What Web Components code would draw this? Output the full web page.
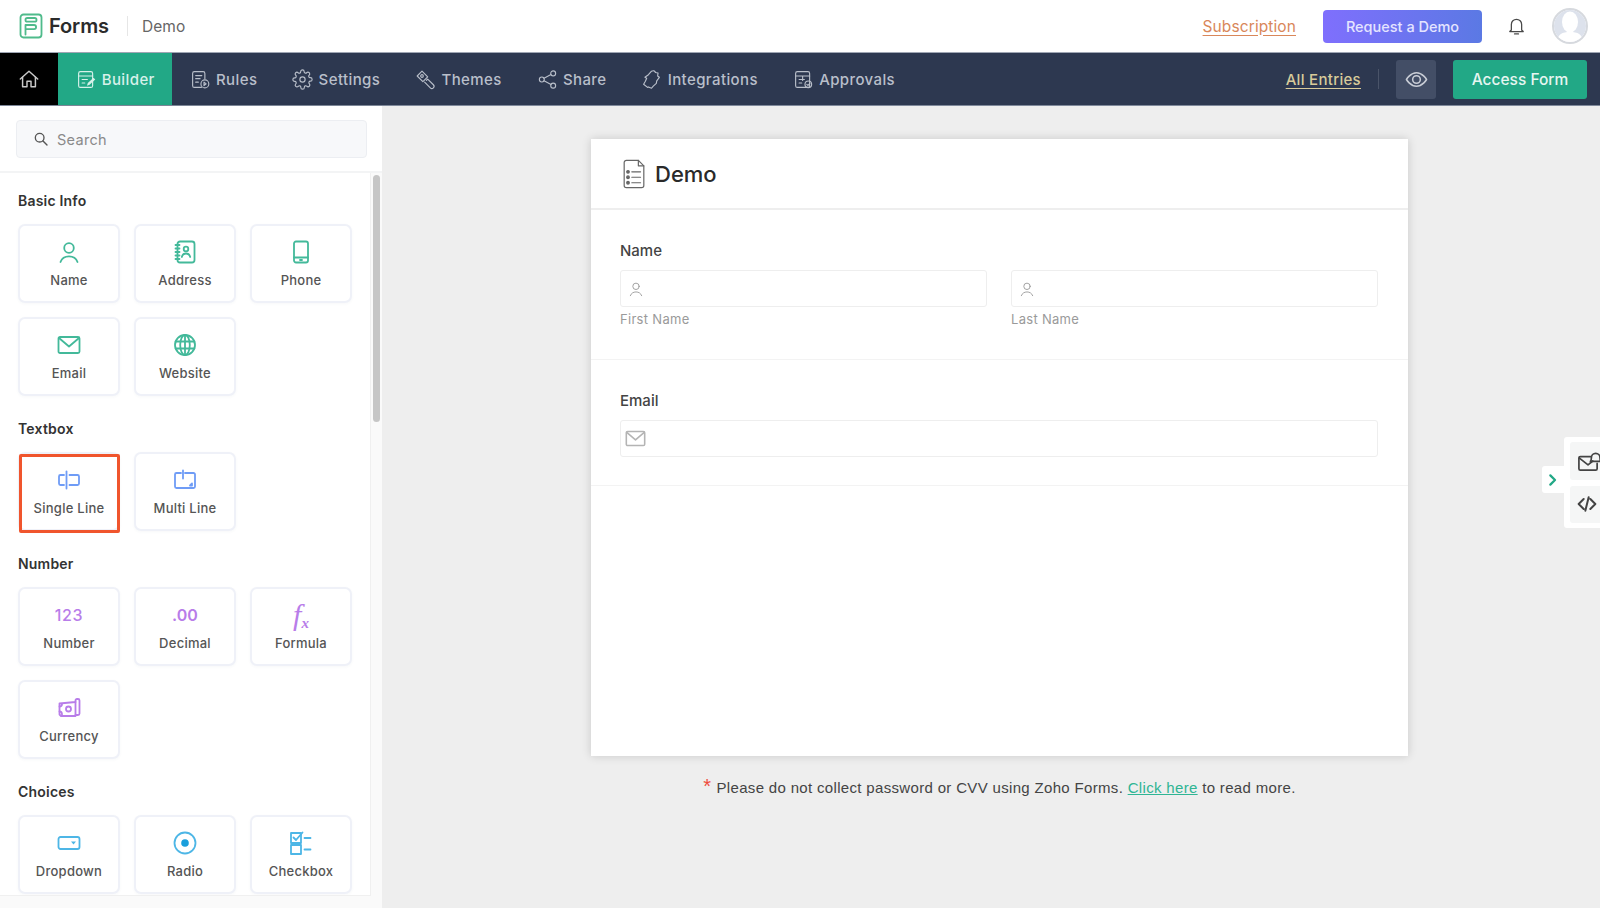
<!DOCTYPE html>
<html lang="en">
<head>
<meta charset="utf-8">
<title>Forms - Demo</title>
<style>
  html, body { margin: 0; padding: 0; height: 100%; overflow: hidden; background: #eee; }
  body { font-family: Inter, "Liberation Sans", sans-serif; }
</style>
</head>
<body>
<fz-app></fz-app>

<script>
// stroke icons, all on a 24 box unless VIEWBOX says otherwise
const ICONS = {
  home: `<path d="M2.5 12 12 3.5l9.5 8.5"/><path d="M5 10v10.5h4.8v-6h4.4v6H19V10"/>`,
  builder: `<rect x="3" y="3" width="16" height="18" rx="2"/><path d="M3 8h16M7 12h6M7 16h3"/><path d="m12.5 19 1-3 6.5-6 2 2-6.5 6z" fill="currentColor" stroke="none"/>`,
  rules: `<path d="M17 11V5a2 2 0 0 0-2-2H5a2 2 0 0 0-2 2v14a2 2 0 0 0 2 2h8"/><path d="M6.5 7.500h7M6.500 11h5M6.500 15h3"/><circle cx="17" cy="17" r="4.500"/><path d="m16 15 2.500 2-2.500 2z"/>`,
  settings: `<path d="M19.400 15a1.650 1.650 0 0 0 .33 1.820l.06.06a2 2 0 0 1-2.830 2.830l-.06-.06a1.650 1.650 0 0 0-2.820 1.180V21a2 2 0 0 1-4 0v-.09A1.650 1.650 0 0 0 7.180 19.730l-.06.06a2 2 0 0 1-2.830-2.830l.06-.06a1.650 1.650 0 0 0-1.180-2.820H3a2 2 0 0 1 0-4h.09A1.650 1.650 0 0 0 4.270 7.180l-.06-.06a2 2 0 0 1 2.830-2.830l.06.06A1.650 1.650 0 0 0 9.920 3.170V3a2 2 0 0 1 4 0v.09a1.650 1.650 0 0 0 2.820 1.180l.06-.06a2 2 0 0 1 2.830 2.830l-.06.06a1.650 1.650 0 0 0 1.180 2.820H21a2 2 0 0 1 0 4h-.09a1.650 1.650 0 0 0-1.510 1z"/><circle cx="12" cy="12" r="3"/>`,
  themes: `<path d="M2.500 8 8 2.500l6.500 6.500L9 14.500z"/><circle cx="8" cy="8" r="1.500"/><path d="m13 13 1.500-1.500 6.500 6.500a2.400 2.400 0 0 1-3.500 3.500L11 15"/>`,
  share: `<circle cx="18.500" cy="5" r="2.800"/><circle cx="5.500" cy="12" r="2.800"/><circle cx="18.500" cy="19" r="2.800"/><path d="m8 10.600 8-4.200M8 13.400l8 4.200"/>`,
  integrations: `<path d="M12 2.500c2-1 4-.5 4.500 1.500l3 .5-.5 3.500 2 1.500-3 4-.5 3-3.500 3-2 2.500-3.500-1.500-1 .5-4.500-3.500L5 14l1.500-3.500-2-1 4-3z"/>`,
  approvals: `<rect x="3" y="3" width="16" height="18" rx="2"/><path d="M3 8h16M7 12h6M7 16h3M11 8v5"/><circle cx="17.500" cy="17.500" r="3.800"/><path d="m15.800 17.500 1.300 1.300 2.200-2.400"/>`,
  eye: `<path d="M1.500 12S5.500 5 12 5s10.500 7 10.500 7-4 7-10.500 7S1.500 12 1.500 12z"/><circle cx="12" cy="12" r="4"/>`,
  bell: `<path d="M5.500 17v-7a6.500 6.500 0 0 1 13 0v7l2 2h-17z"/><path d="M9.500 22h5"/>`,
  search: `<circle cx="10" cy="10" r="6.500"/><path d="m15 15 6 6"/>`,
  person: `<circle cx="12" cy="8" r="4.800"/><path d="M3.500 22c1.300-3.600 4.500-5.600 8.500-5.600s7.200 2 8.500 5.600"/>`,
  address: `<rect x="4.500" y="1.500" width="17" height="21" rx="2.500"/><path d="M2.500 5h4M2.500 8.500h4M2.500 12h4M2.500 15.500h4M2.500 19h4"/><circle cx="13" cy="9" r="2.300"/><path d="M8.800 17c.6-2.300 2.100-3.500 4.200-3.500s3.600 1.200 4.200 3.500"/>`,
  phone: `<rect x="5" y="1.500" width="14" height="21" rx="2"/><path d="M5 17.500h14"/><path d="M11 20h2"/>`,
  mail: `<rect x="1.500" y="4" width="21" height="16" rx="1.500"/><path d="m2 5 10 8.500L22 5"/>`,
  globe: `<circle cx="12" cy="12" r="10"/><ellipse cx="12" cy="12" rx="4.800" ry="10"/><path d="M12 2v20M2.600 8.500h18.800M2.600 15.500h18.800"/>`,
  single: `<path d="M7 7H3.500A1.500 1.500 0 0 0 2 8.500v7A1.500 1.500 0 0 0 3.500 17H7"/><path d="M9.500 3.500v17"/><path d="M12.500 7h8A1.500 1.500 0 0 1 22 8.500v7a1.500 1.500 0 0 1-1.500 1.500h-8"/>`,
  multi: `<path d="M8 5H3.500A1.500 1.500 0 0 0 2 6.500v12A1.500 1.500 0 0 0 3.500 20h17a1.500 1.500 0 0 0 1.500-1.500v-12A1.500 1.500 0 0 0 20.500 5H12"/><path d="M10 2.500v8"/><path d="m19 15.500-2 2h2z" fill="currentColor"/>`,
  currency: `<path d="M2 7.500 18 6V4.500a1.500 1.500 0 0 1 1.500-1.500h1A1.500 1.500 0 0 1 22 4.500v13a1.500 1.500 0 0 1-1.500 1.500H18v1H3.500L2 18.500z"/><path d="M18 6v13"/><circle cx="11" cy="13" r="2.500"/><path d="M2 10.500c1.500 0 2.500-1 2.500-2.500M2 15.500c1.500 0 2.500 1 2.500 3"/>`,
  dropdown: `<rect x="1.500" y="6" width="21" height="12" rx="2"/><path d="m14 10.500h5l-2.500 3z" fill="currentColor" stroke="none"/>`,
  radio: `<circle cx="12" cy="12" r="10.500"/><circle cx="12" cy="12" r="3.800" fill="#1a9fdc" stroke="none"/>`,
  checkbox: `<rect x="2" y="2" width="10" height="10"/><rect x="2" y="14" width="10" height="9"/><path d="m4.500 6.500 2.500 2.500 6.500-7.500M15.500 7h6M15.500 18.500h6"/>`,
  doc: `<path d="M15 1.500H4A2 2 0 0 0 2 3.500v21a2 2 0 0 0 2 2h14a2 2 0 0 0 2-2V6.500z"/><path d="M15 1.500v5h5"/><path d="M9 12h8M9 17h8M9 22h8"/><circle cx="5.500" cy="12" r="1.200" fill="currentColor"/><circle cx="5.500" cy="17" r="1.200" fill="currentColor"/><circle cx="5.500" cy="22" r="1.200" fill="currentColor"/>`,
  logo: `<rect x="1.500" y="1.500" width="21" height="23" rx="3"/><path d="M6.500 21.500V12h8.500a1.800 1.800 0 0 1 0 4.200H6.500"/><rect x="6.500" y="5" width="11" height="3.700" rx="1.800"/>`,
  chevron: `<path d="m8 5 7 7-7 7"/>`,
  code: `<path d="M8 6 2 12l6 6M16 6l6 6-6 6M14 4l-4 16"/>`,
  notify: `<path d="M14 8H3.500A1.500 1.500 0 0 0 2 9.500v11A1.500 1.500 0 0 0 3.500 22h16a1.500 1.500 0 0 0 1.500-1.500V15"/><path d="m2.500 9.500 9 7 5-4"/><path d="M14 13c1-1 1-2 1-4a4.500 4.500 0 0 1 9 0c0 2 0 3 1 4z"/>`
}
const VIEWBOX = { doc: '0 0 22 28', logo: '0 0 24 26' }

class FzIcon extends HTMLElement {
  connectedCallback() {
    const name = this.getAttribute('name')
    const size = this.getAttribute('size') || 18
    const h = this.getAttribute('height') || size
    const sw = this.getAttribute('stroke') || 1.6
    this.attachShadow({ mode: 'open' }).innerHTML = `
      <style>:host { display: inline-flex; flex: none; line-height: 0; } svg { display: block; overflow: visible; }</style>
      <svg width="${size}" height="${h}" viewBox="${VIEWBOX[name] || '0 0 24 24'}" fill="none"
        stroke="currentColor" stroke-width="${sw}" stroke-linecap="round" stroke-linejoin="round">${ICONS[name]}</svg>`
  }
}
customElements.define('fz-icon', FzIcon)

class FzTopbar extends HTMLElement {
  constructor() {
    super()
    this.attachShadow({ mode: 'open' }).innerHTML = `
    <style>
      :host { display: flex; align-items: center; height: 52px; background: #fff; padding: 0 12px 0 19px; flex: none; }
      .logo { color: #4fbb8b; }
      .brand { font-size: 20px; font-weight: 600; color: #2b2b2b; margin-left: 6px; letter-spacing: -.1px; }
      .sep { width: 1px; height: 20px; background: #e6e6e6; margin: 0 14px 0 18px; }
      .title { font-size: 15.500px; color: #666; letter-spacing: .1px; }
      .grow { flex: 1; }
      a { font-size: 15.500px; color: #d9875a; letter-spacing: .1px; text-decoration: underline; text-underline-offset: 3px; }
      button { font: 500 14.500px Inter, sans-serif; color: #e4e4ff; width: 159px; height: 33px; border: 0; border-radius: 4px;
        background: linear-gradient(90deg, #7f6ffd, #5b79e4); margin: 0 25px 0 27px; padding: 0; }
      .bell { color: #4a4a4a; }
      .avatar { margin-left: 26px; width: 36px; height: 36px; box-sizing: border-box; border-radius: 50%; border: 2px solid #d6d9de; overflow: hidden; }
      .avatar svg { display: block; }
    </style>
    <fz-icon class="logo" name="logo" size="24" height="26" stroke="1.800"></fz-icon>
    <span class="brand">Forms</span>
    <span class="sep"></span>
    <span class="title">Demo</span>
    <span class="grow"></span>
    <a>Subscription</a>
    <button>Request a Demo</button>
    <fz-icon class="bell" name="bell" size="19" height="20"></fz-icon>
    <div class="avatar">
      <svg width="32" height="32" viewBox="0 0 32 32"><rect width="32" height="32" fill="#dde2ec"/>
        <ellipse cx="16" cy="12" rx="8" ry="10.500" fill="#fff"/><path d="M3 32c1-8 5-10 13-10s12 2 13 10z" fill="#fff"/></svg>
    </div>`
  }
}
customElements.define('fz-topbar', FzTopbar)

class FzNavItem extends HTMLElement {
  constructor() {
    super()
    this.attachShadow({ mode: 'open' }).innerHTML = `
    <style>
      :host { display: flex; align-items: center; gap: 5.200px; padding: 0 17.500px; height: 100%; color: #b9bfca; font-size: 15px; font-weight: 500; letter-spacing: .4px; }
      :host([active]) { background: #22a886; color: #d7f1ea; }
    </style>
    <slot name="icon"></slot><slot></slot>`
  }
}
customElements.define('fz-nav-item', FzNavItem)

class FzNavbar extends HTMLElement {
  constructor() {
    super()
    this.attachShadow({ mode: 'open' }).innerHTML = `
    <style>
      :host { display: flex; align-items: center; height: 52px; background: #2d3850; flex: none;
        border-top: 1px solid #9fa6b4; border-bottom: 1px solid #7f899b; box-sizing: content-box; padding-right: 13px; }
      .home { width: 58px; height: 100%; background: #000; color: #c9c9c9; display: flex; align-items: center; justify-content: center; }
      .grow { flex: 1; }
      a { color: #d8cb9a; font-size: 15px; font-weight: 500; letter-spacing: .3px; text-decoration: underline; text-underline-offset: 3px; }
      .sep { width: 1px; height: 20px; background: #4a5469; margin: 0 17px; }
      .eye { width: 40px; height: 39px; background: #434e66; border-radius: 3px; display: flex; align-items: center; justify-content: center; color: #c9cdd6; }
      button { margin-left: 17px; width: 134px; height: 39px; border: 0; border-radius: 3px; background: #22a886; color: #e6f6f1;
        font: 500 15.500px Inter, sans-serif; padding: 0; }
    </style>
    <div class="home"><fz-icon name="home" size="22"></fz-icon></div>
    <slot></slot>
    <span class="grow"></span>
    <a>All Entries</a>
    <span class="sep"></span>
    <div class="eye"><fz-icon name="eye" size="23"></fz-icon></div>
    <button>Access Form</button>`
  }
}
customElements.define('fz-navbar', FzNavbar)

class FzFieldCard extends HTMLElement {
  connectedCallback() {
    this.attachShadow({ mode: 'open' }).innerHTML = `
    <style>
      :host { display: flex; flex-direction: column; align-items: center; position: relative; box-sizing: border-box; height: 79px;
        background: #fff; border: 2px solid #eff1f8; border-radius: 7px; color: #555; font-size: 13px; font-weight: 500; letter-spacing: .25px; box-shadow: 0 1px 3px rgba(60,70,110,.04); }
      :host([selected])::after { content: ""; position: absolute; left: -1px; top: 0; right: -2px; bottom: -4px;
        border: 3px solid #f0552d; border-radius: 2px; }
      .glyph { height: 28px; margin-top: 12px; display: flex; align-items: center; justify-content: center; color: var(--tint); }
      .label { margin-top: 5px; line-height: 18px; white-space: nowrap; }
    </style>
    <div class="glyph"><slot></slot></div>
    <div class="label">${this.getAttribute('label')}</div>`
  }
}
customElements.define('fz-field-card', FzFieldCard)

class FzFieldGroup extends HTMLElement {
  connectedCallback() {
    this.attachShadow({ mode: 'open' }).innerHTML = `
    <style>
      :host { display: block; margin-bottom: 22px; }
      h3 { margin: 0 0 13px; font-size: 14px; font-weight: 600; line-height: 21px; letter-spacing: .2px; color: #333; }
      .grid { display: grid; grid-template-columns: repeat(3, 102px); gap: 14px; }
    </style>
    <h3>${this.getAttribute('title')}</h3>
    <div class="grid"><slot></slot></div>`
  }
}
customElements.define('fz-field-group', FzFieldGroup)

class FzSidebar extends HTMLElement {
  constructor() {
    super()
    this.attachShadow({ mode: 'open' }).innerHTML = `
    <style>
      :host { display: flex; flex-direction: column; width: 382px; flex: none; background: #fafafa; box-shadow: 2px 0 6px rgba(0,0,0,.05); min-height: 0; }
      .top { background: #fff; height: 67px; box-sizing: border-box; padding: 14px 15px 0 16px; border-bottom: 2px solid #f3f4f5; flex: none; }
      .search { box-sizing: border-box; height: 38px; display: flex; align-items: center; gap: 8px; padding: 0 16px; background: #f7f8fa;
        border: 1.500px solid #eceef2; border-radius: 4px; color: #8a8a8a; font-size: 14.500px; letter-spacing: .3px; }
      .search fz-icon { color: #555; }
      .body { flex: 1; min-height: 0; display: flex; margin-bottom: 12px; }
      .list { width: 371px; box-sizing: border-box; background: #fff; padding: 17px 0 0 18px; border-right: 1.500px solid #f0f0f0; border-bottom: 1.500px solid #f0f0f0; overflow: hidden; }
      .thumb { width: 7px; height: 247px; margin: 2px 0 0 2px; background: #c6c6c6; border-radius: 4px; }
    </style>
    <div class="top"><div class="search"><fz-icon name="search" size="16" stroke="2"></fz-icon>Search</div></div>
    <div class="body"><div class="list"><slot></slot></div><div class="thumb"></div></div>`
  }
}
customElements.define('fz-sidebar', FzSidebar)

class FzInput extends HTMLElement {
  connectedCallback() {
    const hint = this.getAttribute('hint')
    const mail = this.getAttribute('icon') === 'mail'
    this.attachShadow({ mode: 'open' }).innerHTML = `
    <style>
      :host { display: block; }
      .box { box-sizing: border-box; height: 37px; border: 1.500px solid #eeeeee; border-radius: 3px; display: flex; align-items: center; padding-left: ${mail ? 4 : 7}px; color: ${mail ? '#b4b4b4' : '#9c9c9c'}; background: #fff; }
      .hint { margin-top: 3px; font-size: 13px; line-height: 18px; letter-spacing: .3px; color: #9a9a9a; }
    </style>
    <div class="box"><fz-icon name="${this.getAttribute('icon')}" size="${mail ? 21 : 16}" stroke="${mail ? 1.8 : 1.4}"></fz-icon></div>
    ${hint ? `<div class="hint">${hint}</div>` : ''}`
  }
}
customElements.define('fz-input', FzInput)

class FzFormSection extends HTMLElement {
  connectedCallback() {
    this.attachShadow({ mode: 'open' }).innerHTML = `
    <style>
      :host { display: block; box-sizing: border-box; padding: 31px 30px 31px 29px; border-bottom: 1.500px solid #f3f3f3; }
      :host([wide]) { padding-bottom: 28px; }
      label { display: block; font-size: 15px; font-weight: 500; line-height: 20px; color: #444; margin-bottom: 9px; }
      .cols { display: grid; grid-template-columns: 1fr 1fr; gap: 24px; }
      :host([wide]) .cols { grid-template-columns: 1fr; }
    </style>
    <label>${this.getAttribute('label')}</label>
    <div class="cols"><slot></slot></div>`
  }
}
customElements.define('fz-form-section', FzFormSection)

class FzFormCard extends HTMLElement {
  connectedCallback() {
    this.attachShadow({ mode: 'open' }).innerHTML = `
    <style>
      :host { display: block; width: 817px; height: 617px; background: #fff; box-shadow: 0 0 9px rgba(0,0,0,.16); flex: none; }
      header { height: 71px; box-sizing: border-box; border-bottom: 2px solid #eeeeee; display: flex; align-items: center; gap: 9px; padding-left: 31px; }
      header fz-icon { color: #666; }
      h1 { margin: 0; font-size: 22px; font-weight: 500; color: #2a2a2a; }
    </style>
    <header><fz-icon name="doc" size="24" height="32" stroke="1.100"></fz-icon><h1>${this.getAttribute('title')}</h1></header>
    <slot></slot>`
  }
}
customElements.define('fz-form-card', FzFormCard)

class FzSideTools extends HTMLElement {
  constructor() {
    super()
    this.attachShadow({ mode: 'open' }).innerHTML = `
    <style>
      :host { position: absolute; right: 0; top: 331px; width: 58px; height: 91px; display: block; overflow: hidden; }
      .panel { position: absolute; right: 0; top: 0; width: 36px; height: 91px; box-sizing: border-box; background: #fff; padding: 5px 0 5px 6px; display: flex; flex-direction: column; gap: 6px; border-radius: 3px 0 0 3px; }
      .tool { flex: 1; background: #f5f6f6; color: #444; display: flex; align-items: center; padding-left: 7px; border-radius: 3px 0 0 3px; overflow: hidden; }
      .tab { position: absolute; left: 0; top: 29px; width: 22px; height: 27px; background: #fff; color: #22a886; display: flex; align-items: center; justify-content: center; border-radius: 3px 0 0 3px; }
    </style>
    <div class="tab"><fz-icon name="chevron" size="16" stroke="3.400"></fz-icon></div>
    <div class="panel">
      <div class="tool"><fz-icon name="notify" size="23" stroke="1.800"></fz-icon></div>
      <div class="tool"><fz-icon name="code" size="20" stroke="2.400"></fz-icon></div>
    </div>`
  }
}
customElements.define('fz-side-tools', FzSideTools)

class FzApp extends HTMLElement {
  constructor() {
    super()
    const nav = [['builder','Builder',1],['rules','Rules'],['settings','Settings'],['themes','Themes'],['share','Share'],['integrations','Integrations'],['approvals','Approvals']]
      .map(([i, t, a]) => `<fz-nav-item ${a ? 'active' : ''}><fz-icon slot="icon" name="${i}" size="21" height="21" stroke="1.300"></fz-icon>${t}</fz-nav-item>`).join('')
    const card = (label, icon, tint, extra = '', w = 24, h = 24) =>
      `<fz-field-card label="${label}" ${extra} style="--tint:${tint}"><fz-icon name="${icon}" size="${w}" height="${h}" stroke="1.800"></fz-icon></fz-field-card>`
    const green = '#43b99a', blue = '#6f9cf6', purple = '#b87de9', sky = '#4db6e6'
    const txt = (s, css, ls = '0') => `<span style="font:${css};color:${purple};letter-spacing:${ls}">${s}</span>`
    this.attachShadow({ mode: 'open' }).innerHTML = `
    <style>
      :host { display: flex; flex-direction: column; width: 1600px; height: 908px; }
      .main { flex: 1; display: flex; min-height: 0; position: relative; }
      .stage { flex: 1; padding: 33px 0 0 209px; background: #eeeeee; display: flex; flex-direction: column; align-items: flex-start; }
      .note { width: 817px; margin-top: 22px; font: 15px/20px "Liberation Sans", sans-serif; letter-spacing: .33px; color: #444; display: flex; justify-content: center; white-space: pre; }
      .note b { color: #ee4b3c; font-weight: 400; font-size: 20px; line-height: 16px; margin-right: 5px; }
      .note a { color: #2fb594; text-decoration: underline; }
    </style>
    <fz-topbar></fz-topbar>
    <fz-navbar>${nav}</fz-navbar>
    <div class="main">
      <fz-sidebar>
        <fz-field-group title="Basic Info">
          ${card('Name', 'person', green)}${card('Address', 'address', green)}${card('Phone', 'phone', green)}
          ${card('Email', 'mail', green, '', 26, 24)}${card('Website', 'globe', green)}
        </fz-field-group>
        <fz-field-group title="Textbox">
          ${card('Single Line', 'single', blue, 'selected', 26, 24)}${card('Multi Line', 'multi', blue, '', 26, 24)}
        </fz-field-group>
        <fz-field-group title="Number">
          <fz-field-card label="Number" style="--tint:${purple}">${txt('123', "500 16px Inter, sans-serif", '.6px')}</fz-field-card>
          <fz-field-card label="Decimal" style="--tint:${purple}">${txt('.00', "600 16px Inter, sans-serif")}</fz-field-card>
          <fz-field-card label="Formula" style="--tint:${purple}">${txt("f<sub style=\"font:italic 700 15px 'Liberation Serif',serif;vertical-align:-3px\">x</sub>", "italic 30px 'Liberation Serif', serif")}</fz-field-card>
          ${card('Currency', 'currency', purple, '', 25, 24)}
        </fz-field-group>
        <fz-field-group title="Choices">
          ${card('Dropdown', 'dropdown', sky, '', 26, 24)}${card('Radio', 'radio', sky)}${card('Checkbox', 'checkbox', sky)}
        </fz-field-group>
      </fz-sidebar>
      <div class="stage">
        <fz-form-card title="Demo">
          <fz-form-section label="Name">
            <fz-input icon="person" hint="First Name"></fz-input>
            <fz-input icon="person" hint="Last Name"></fz-input>
          </fz-form-section>
          <fz-form-section label="Email" wide>
            <fz-input icon="mail"></fz-input>
          </fz-form-section>
        </fz-form-card>
        <div class="note"><b>*</b>Please do not collect password or CVV using Zoho Forms. <a>Click here</a> to read more.</div>
      </div>
      <fz-side-tools></fz-side-tools>
    </div>`
  }
}
customElements.define('fz-app', FzApp)
</script>
</body>
</html>
